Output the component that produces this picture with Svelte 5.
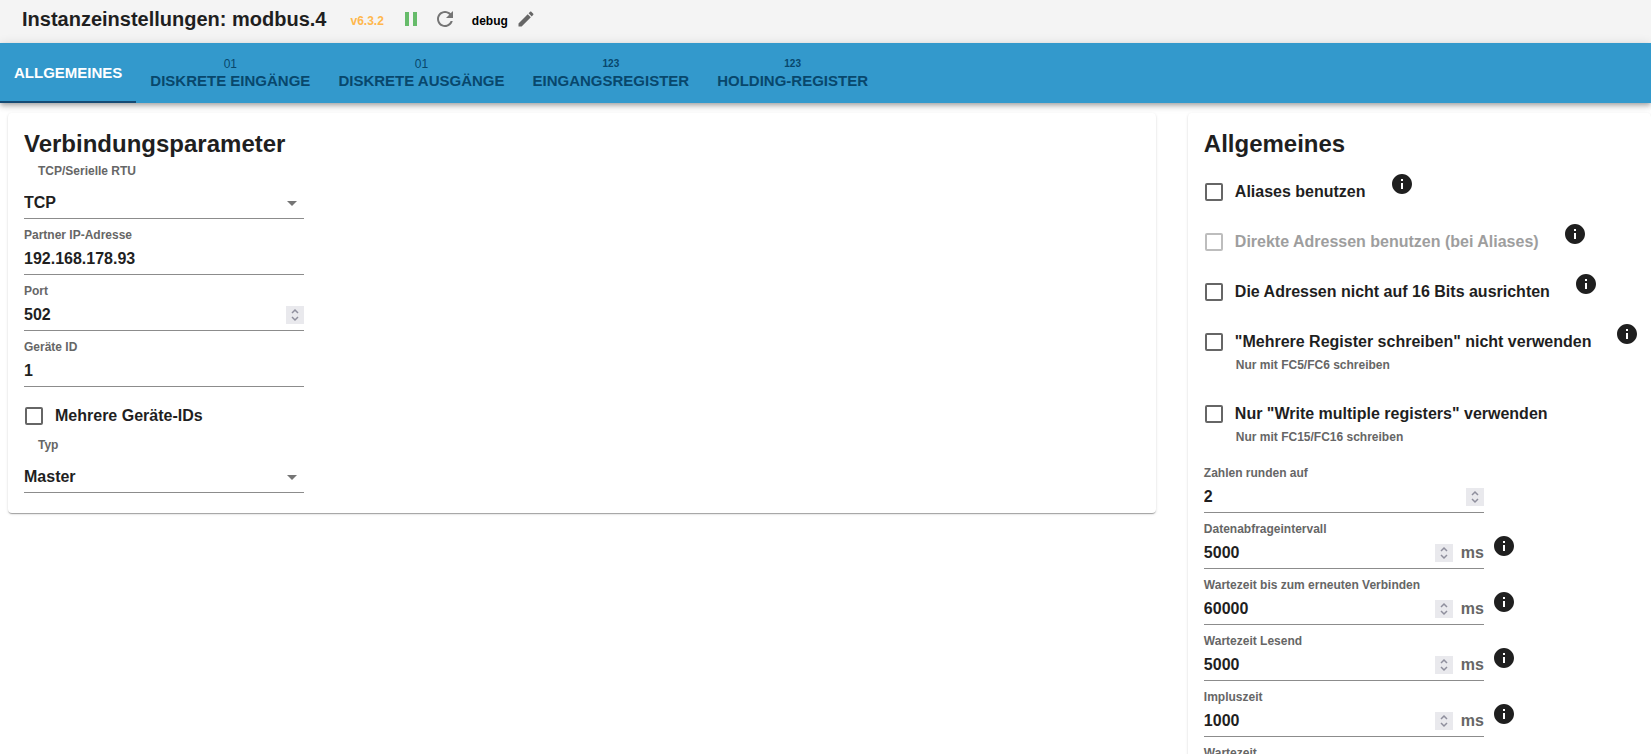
<script lang="ts">
  interface Tab {
    label: string;
    icon?: string;
    small?: boolean;
  }

  interface Option {
    id: string;
    label: string;
    help?: string;
    info?: boolean;
    disabled?: boolean;
  }

  interface NumberSetting {
    id: string;
    label: string;
    value: number;
    unit?: string;
  }

  const tabs: Tab[] = [
    { label: 'Allgemeines' },
    { label: 'Diskrete Eingänge', icon: '01' },
    { label: 'Diskrete Ausgänge', icon: '01' },
    { label: 'Eingangsregister', icon: '123', small: true },
    { label: 'Holding-Register', icon: '123', small: true }
  ];

  const options: Option[] = [
    { id: 'aliases', label: 'Aliases benutzen', info: true },
    { id: 'direct', label: 'Direkte Adressen benutzen (bei Aliases)', info: true, disabled: true },
    { id: 'align', label: 'Die Adressen nicht auf 16 Bits ausrichten', info: true },
    {
      id: 'no-multi',
      label: '"Mehrere Register schreiben" nicht verwenden',
      help: 'Nur mit FC5/FC6 schreiben',
      info: true
    },
    {
      id: 'only-multi',
      label: 'Nur "Write multiple registers" verwenden',
      help: 'Nur mit FC15/FC16 schreiben'
    }
  ];

  let activeTab = $state(0);
  let connection = $state('TCP');
  let ip = $state('192.168.178.93');
  let port = $state({ id: 'port', label: 'Port', value: 502 });
  let deviceId = $state('1');
  let multiIds = $state(false);
  let mode = $state('Master');

  let numbers: NumberSetting[] = $state([
    { id: 'round', label: 'Zahlen runden auf', value: 2 },
    { id: 'poll', label: 'Datenabfrageintervall', value: 5000, unit: 'ms' },
    { id: 'reconnect', label: 'Wartezeit bis zum erneuten Verbinden', value: 60000, unit: 'ms' },
    { id: 'read', label: 'Wartezeit Lesend', value: 5000, unit: 'ms' },
    { id: 'pulse', label: 'Impluszeit', value: 1000, unit: 'ms' },
    { id: 'wait', label: 'Wartezeit', value: 50, unit: 'ms' }
  ]);
</script>

{#snippet infoIcon()}
  <svg class="info" viewBox="0 0 24 24" width="24" height="24" role="img" aria-label="Info">
    <path d="M12 2C6.48 2 2 6.48 2 12s4.48 10 10 10 10-4.48 10-10S17.52 2 12 2zm1 15h-2v-6h2v6zm0-8h-2V7h2v2z" />
  </svg>
{/snippet}

{#snippet numberField(item: NumberSetting)}
  <div class="field">
    <label for={item.id}>{item.label}</label>
    <div class="control">
      <input id={item.id} type="number" bind:value={item.value} />
      <div class="stepper">
        <button type="button" aria-label="Erhöhen" onclick={() => item.value++}>
          <svg viewBox="0 0 18 9" width="18" height="9"><path d="M6 7l3-3 3 3" /></svg>
        </button>
        <button type="button" aria-label="Verringern" onclick={() => item.value--}>
          <svg viewBox="0 0 18 9" width="18" height="9"><path d="M6 2l3 3 3-3" /></svg>
        </button>
      </div>
      {#if item.unit}
        <span class="unit">{item.unit}</span>
      {/if}
    </div>
  </div>
{/snippet}

<div class="page">
  <header>
    <h1>Instanzeinstellungen: modbus.4</h1>
    <span class="version">v6.3.2</span>
    <button class="icon-button" type="button" aria-label="Pause">
      <svg viewBox="0 0 24 24" width="24" height="24" fill="#66bb6a"><path d="M6 19h4V5H6v14zm8-14v14h4V5h-4z" /></svg>
    </button>
    <button class="icon-button" type="button" aria-label="Neu starten">
      <svg viewBox="0 0 24 24" width="24" height="24" fill="#757575">
        <path d="M17.65 6.35C16.2 4.9 14.21 4 12 4c-4.42 0-7.99 3.58-7.99 8s3.57 8 7.99 8c3.73 0 6.84-2.55 7.73-6h-2.08c-.82 2.33-3.04 4-5.65 4-3.31 0-6-2.69-6-6s2.69-6 6-6c1.66 0 3.14.69 4.22 1.78L13 11h7V4l-2.35 2.35z" />
      </svg>
    </button>
    <span class="loglevel">debug</span>
    <button class="icon-button edit" type="button" aria-label="Bearbeiten">
      <svg viewBox="0 0 24 24" width="20" height="20" fill="#666">
        <path d="M3 17.25V21h3.75L17.81 9.94l-3.75-3.75L3 17.25zM20.71 7.04c.39-.39.39-1.02 0-1.41l-2.34-2.34c-.39-.39-1.02-.39-1.41 0l-1.83 1.83 3.75 3.75 1.83-1.83z" />
      </svg>
    </button>
  </header>

  <nav role="tablist">
    {#each tabs as tab, i}
      <button
        type="button"
        role="tab"
        class="tab"
        class:active={activeTab === i}
        aria-selected={activeTab === i}
        onclick={() => (activeTab = i)}
      >
        {#if tab.icon}
          <span class="tab-icon" class:small={tab.small}>{tab.icon}</span>
        {/if}
        <span>{tab.label}</span>
      </button>
    {/each}
  </nav>

  <main>
    <section class="card">
      <h2>Verbindungsparameter</h2>

      <div class="field select-field">
        <label for="connection">TCP/Serielle RTU</label>
        <div class="control">
          <select id="connection" bind:value={connection}>
            <option>TCP</option>
            <option>Serial</option>
          </select>
          <svg class="arrow" viewBox="0 0 24 24" width="24" height="24"><path d="M7 10l5 5 5-5z" /></svg>
        </div>
      </div>

      <div class="field">
        <label for="ip">Partner IP-Adresse</label>
        <div class="control">
          <input id="ip" type="text" bind:value={ip} />
        </div>
      </div>

      {@render numberField(port)}

      <div class="field">
        <label for="device-id">Geräte ID</label>
        <div class="control">
          <input id="device-id" type="text" bind:value={deviceId} />
        </div>
      </div>

      <div class="check-row">
        <label class="check">
          <input type="checkbox" bind:checked={multiIds} />
          <span>Mehrere Geräte-IDs</span>
        </label>
      </div>

      <div class="field select-field">
        <label for="mode">Typ</label>
        <div class="control">
          <select id="mode" bind:value={mode}>
            <option>Master</option>
            <option>Slave</option>
          </select>
          <svg class="arrow" viewBox="0 0 24 24" width="24" height="24"><path d="M7 10l5 5 5-5z" /></svg>
        </div>
      </div>
    </section>

    <section class="card">
      <h2>Allgemeines</h2>

      <div class="options">
        {#each options as option}
          <div class="check-row">
            <div>
              <label class="check" class:disabled={option.disabled}>
                <input id={option.id} type="checkbox" disabled={option.disabled} />
                <span>{option.label}</span>
              </label>
              {#if option.help}
                <p class="help">{option.help}</p>
              {/if}
            </div>
            {#if option.info}
              {@render infoIcon()}
            {/if}
          </div>
        {/each}
      </div>

      {#each numbers as item}
        <div class="number-row">
          {@render numberField(item)}
          {#if item.unit}
            {@render infoIcon()}
          {/if}
        </div>
      {/each}
    </section>
  </main>
</div>

<style>
  :global(body) {
    background: #fff;
    overflow: hidden;
  }

  .page {
    height: 100vh;
    display: flex;
    flex-direction: column;
    overflow: hidden;
    font-family: 'Liberation Sans', Arial, Helvetica, sans-serif;
    font-size: 16px;
    font-weight: 700;
    color: #1f1f1f;
  }

  button,
  input,
  select {
    font: inherit;
    color: inherit;
    border: none;
    background: none;
    margin: 0;
    padding: 0;
    outline: none;
  }

  button {
    cursor: pointer;
  }

  svg {
    display: block;
    flex-shrink: 0;
  }

  /* Header */
  header {
    display: flex;
    align-items: center;
    flex-shrink: 0;
    height: 38px;
    padding: 0 22px 5px;
    background: #f4f4f4;
  }

  h1 {
    margin: 0 24px 0 0;
    font-size: 20px;
    line-height: 24px;
  }

  .version {
    margin-right: 15px;
    padding-top: 3px;
    font-size: 12px;
    color: #ffb74d;
  }

  .icon-button {
    margin-right: 10px;
  }

  .loglevel {
    margin: 0 8px 0 5px;
    padding-top: 3px;
    font-size: 12px;
    color: #000;
  }

  .icon-button.edit {
    margin: 0;
  }

  /* Tabs */
  nav {
    display: flex;
    flex-shrink: 0;
    height: 60px;
    background: #3399cc;
    box-shadow: 0 2px 4px -1px rgba(0, 0, 0, 0.2), 0 4px 5px rgba(0, 0, 0, 0.14), 0 1px 10px rgba(0, 0, 0, 0.12);
  }

  .tab {
    display: flex;
    flex-direction: column;
    align-items: center;
    justify-content: center;
    padding: 0 14px;
    font-size: 15px;
    line-height: 18px;
    text-transform: uppercase;
    color: #08476c;
  }

  .tab.active {
    color: #fff;
    box-shadow: inset 0 -2px #144a74;
  }

  .tab-icon {
    font-size: 12px;
    font-weight: 400;
    line-height: 16px;
  }

  .tab-icon.small {
    font-size: 10px;
    font-weight: 700;
  }

  /* Content */
  main {
    display: grid;
    grid-template-columns: 57fr 23fr;
    align-items: start;
    gap: 32px;
    padding: 10px 0 0 8px;
  }

  .card {
    box-sizing: border-box;
    min-width: 0;
    padding: 16px 16px 20px;
    background: #fff;
    border-radius: 4px;
    box-shadow: 0 2px 1px -1px rgba(0, 0, 0, 0.2), 0 1px 1px rgba(0, 0, 0, 0.14), 0 1px 3px rgba(0, 0, 0, 0.12);
  }

  h2 {
    margin: 0;
    font-size: 24px;
    line-height: 30px;
  }

  /* Fields */
  .field {
    width: 280px;
    margin-bottom: 8px;
  }

  .field label {
    display: block;
    height: 16px;
    font-size: 12px;
    line-height: 16px;
    color: #666;
  }

  .card > .field:last-child {
    margin-bottom: 0;
  }

  .select-field label {
    height: 20px;
    padding: 4px 0 0 14px;
  }

  .control {
    display: flex;
    align-items: center;
    box-sizing: border-box;
    height: 32px;
    border-bottom: 1px solid #8c8c8c;
  }

  .select-field .control {
    height: 36px;
    padding-top: 4px;
  }

  .control input,
  .control select {
    flex: 1;
    min-width: 0;
    height: 24px;
  }

  .control select {
    appearance: none;
    margin-right: -24px;
    padding-right: 24px;
  }

  .arrow {
    fill: #757575;
    pointer-events: none;
  }

  input[type='number'] {
    appearance: textfield;
  }

  input[type='number']::-webkit-inner-spin-button,
  input[type='number']::-webkit-outer-spin-button {
    appearance: none;
    margin: 0;
  }

  .stepper {
    width: 18px;
    height: 18px;
    background: #e9e9ed;
  }

  .stepper button {
    display: block;
    height: 9px;
  }

  .stepper path {
    fill: none;
    stroke: #8f8f9d;
    stroke-width: 1.5;
  }

  .unit {
    margin-left: 8px;
    color: #666;
  }

  .number-row {
    display: flex;
    align-items: center;
    gap: 8px;
  }

  .number-row .info {
    margin-bottom: 6px;
  }

  .info {
    fill: #1f1f1f;
  }

  /* Checkboxes */
  .options {
    margin: 12px 0 8px;
  }

  .check-row {
    display: flex;
    align-items: flex-start;
    gap: 24px;
    margin-bottom: 8px;
  }

  .check-row .info {
    margin-top: 1px;
  }

  .card > .check-row {
    height: 38px;
    margin-bottom: 0;
  }

  .check {
    display: flex;
    align-items: center;
    gap: 12px;
    height: 42px;
    padding-left: 1px;
    white-space: nowrap;
  }

  .check input {
    appearance: none;
    box-sizing: border-box;
    width: 18px;
    height: 18px;
    border: 2px solid #666;
    border-radius: 2px;
  }

  .check input:checked {
    background: #3399cc;
    border-color: #3399cc;
  }

  .check.disabled {
    color: #9e9e9e;
  }

  .check.disabled input {
    border-color: #bdbdbd;
  }

  .help {
    margin: -6px 0 0 32px;
    padding-bottom: 12px;
    font-size: 12px;
    line-height: 16px;
    color: #666;
  }
</style>
